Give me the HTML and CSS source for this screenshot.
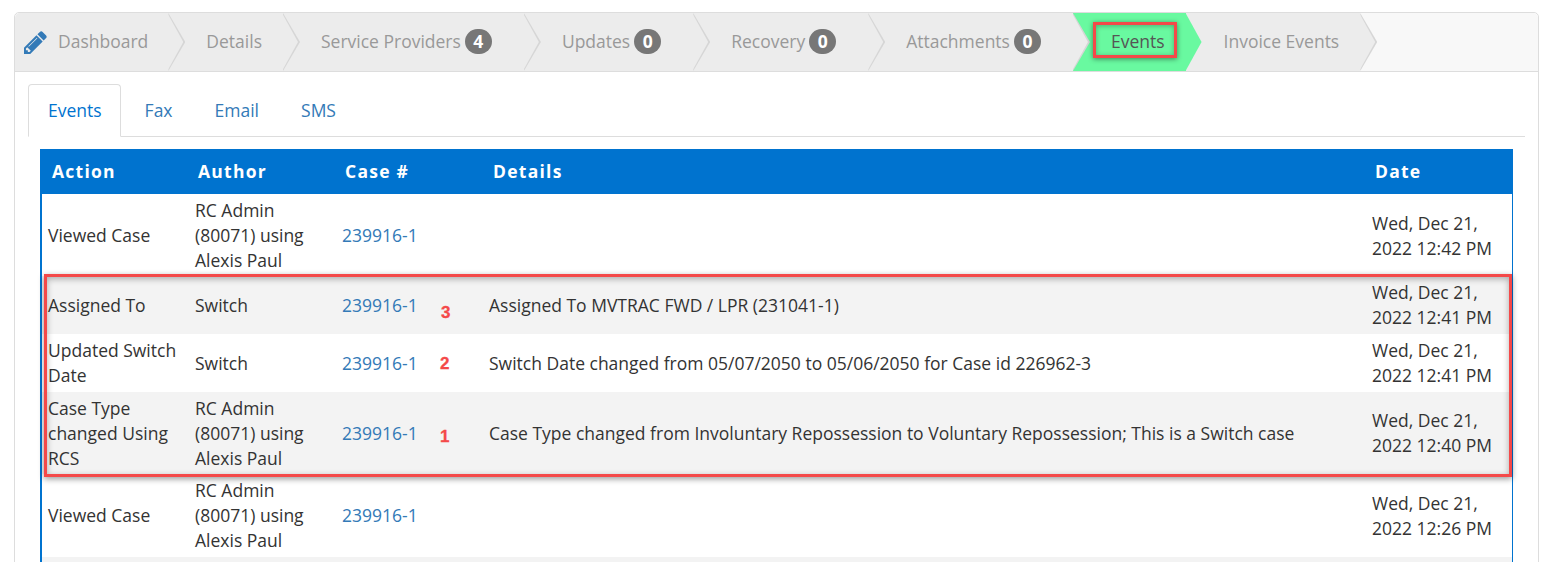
FILE: index.html
```html
<!DOCTYPE html>
<html lang="en">
  <head>
    <meta charset="UTF-8" />
    <title>Case Events</title>
    <link rel="stylesheet" href="styles.css">
  </head>
  <body>
    <div class="panel">
      <div class="steps">
        <a class="step step-first">
          <svg class="pencil" viewBox="128 128 1536 1536"><path d="M491 1536l91-91-235-235-91 91v107h128v128h107zm523-928q0-22-22-22-10 0-17 7l-542 542q-7 7-7 17 0 22 22 22 10 0 17-7l542-542q7-7 7-17zm-54-192l416 416-832 832h-416v-416zm683 96q0 53-37 90l-166 166-416-416 166-165q36-38 90-38 53 0 91 38l235 234q37 39 37 91z"/></svg>
          Dashboard
        </a>
        <a class="step">Details</a>
        <a class="step">Service Providers<span class="badge">4</span></a>
        <a class="step">Updates<span class="badge">0</span></a>
        <a class="step">Recovery<span class="badge">0</span></a>
        <a class="step">Attachments<span class="badge">0</span></a>
        <a class="step step-active">Events<span class="mark-box"></span></a>
        <a class="step">Invoice Events</a>
      </div>

      <div class="panel-body">
        <ul class="tabs">
          <li class="tab tab-active"><a>Events</a></li>
          <li class="tab"><a>Fax</a></li>
          <li class="tab"><a>Email</a></li>
          <li class="tab"><a>SMS</a></li>
        </ul>

        <div class="table-wrap">
          <table class="events">
            <colgroup>
              <col class="col-small" />
              <col class="col-small" />
              <col class="col-small" />
              <col />
              <col class="col-date" />
            </colgroup>
            <thead>
              <tr>
                <th>Action</th>
                <th class="th-tight">Author</th>
                <th class="th-tight">Case #</th>
                <th>Details</th>
                <th class="th-tight">Date</th>
              </tr>
            </thead>
            <tbody>
              <tr class="row-tall">
                <td>Viewed Case</td>
                <td>RC Admin (80071) using Alexis Paul</td>
                <td><a class="case-link">239916-1</a></td>
                <td></td>
                <td class="td-low">Wed, Dec 21, 2022 12:42 PM</td>
              </tr>
              <tr class="row-grey">
                <td>Assigned To</td>
                <td>Switch</td>
                <td><a class="case-link">239916-1</a></td>
                <td>Assigned To MVTRAC FWD / LPR (231041-1)</td>
                <td>Wed, Dec 21, 2022 12:41 PM</td>
              </tr>
              <tr>
                <td>Updated Switch Date</td>
                <td>Switch</td>
                <td><a class="case-link">239916-1</a></td>
                <td>Switch Date changed from 05/07/2050 to 05/06/2050 for Case id 226962-3</td>
                <td>Wed, Dec 21, 2022 12:41 PM</td>
              </tr>
              <tr class="row-tall row-grey">
                <td>Case Type changed Using RCS</td>
                <td>RC Admin (80071) using Alexis Paul</td>
                <td><a class="case-link">239916-1</a></td>
                <td>Case Type changed from Involuntary Repossession to Voluntary Repossession; This is a Switch case</td>
                <td>Wed, Dec 21, 2022 12:40 PM</td>
              </tr>
              <tr class="row-tall row-last">
                <td>Viewed Case</td>
                <td>RC Admin (80071) using Alexis Paul</td>
                <td><a class="case-link">239916-1</a></td>
                <td></td>
                <td>Wed, Dec 21, 2022 12:26 PM</td>
              </tr>
              <tr class="row-grey">
                <td></td>
                <td></td>
                <td></td>
                <td></td>
                <td></td>
              </tr>
            </tbody>
          </table>

          <!-- annotations drawn over the table -->
          <div class="mark-rows"></div>
          <span class="mark-num num-3">3</span>
          <span class="mark-num num-2">2</span>
          <span class="mark-num num-1">1</span>
        </div>
      </div>
    </div>
  </body>
</html>
```

FILE: styles.css
```css
html,
body {
  height: 100%;
  overflow: hidden;
}
body {
  margin: 0;
  padding: 12px 11px 0 14px;
  box-sizing: border-box;
  background-color: white;
  font-family: "Open Sans", sans-serif;
  font-size: 17.5px;
  line-height: 25px;
  color: #333;
}
.panel {
  border: 1px solid #ddd;
  border-radius: 5px;
  height: 700px;
}
.steps {
  display: flex;
  height: 58px;
  background-color: #f8f8f8;
  border-bottom: 1px solid #ddd;
  border-radius: 5px 5px 0 0;
}
.step {
  position: relative;
  display: flex;
  align-items: center;
  padding: 0 21px 2px 38px;
  background-color: #ececec;
  color: #999;
}
.step-first {
  padding-left: 9px;
  padding-right: 20px;
  border-top-left-radius: 5px;
}
/* chevron: a grey shape with the fill shape on top, one pixel in */
.step::before,
.step::after {
  content: "";
  position: absolute;
  top: 0;
  bottom: 0;
  clip-path: polygon(0 0, 100% 50%, 0 100%);
  z-index: 1;
}
.step::before {
  left: 100%;
  width: 17px;
  background-color: #d6d6d6;
}
.step::after {
  left: 100%;
  width: 16px;
  margin-left: -1px;
  background-color: #ececec;
}
.step-active {
  background-color: #69f9a0;
  color: #555;
}
.step-active::before {
  display: none;
}
.step-active::after {
  margin-left: 0;
  background-color: #69f9a0;
}
.pencil {
  width: 23px;
  height: 23px;
  margin-top: 2px;
  margin-right: 11px;
  fill: #337ab7;
}
.badge {
  display: block;
  min-width: 27px;
  height: 25px;
  margin: 0 11px 0 4px;
  border-radius: 13px;
  background-color: #777;
  color: white;
  font-weight: bold;
  text-align: center;
}
.mark-box {
  position: absolute;
  top: 9px;
  left: 20px;
  width: 84px;
  height: 36px;
  box-sizing: border-box;
  border: 3px solid #f44949;
  box-shadow: 0 1px 5px rgba(0, 0, 0, 0.45), inset 0 1px 5px rgba(0, 0, 0, 0.3);
  z-index: 2;
}
.panel-body {
  padding: 12px 13px 0;
}
.tabs {
  display: flex;
  margin: 0;
  padding: 0;
  list-style: none;
  border-bottom: 1px solid #ddd;
}
.tab {
  margin-right: 2px;
  margin-bottom: -1px;
  padding: 13px 19px;
  border: 1px solid transparent;
  color: #337ab7;
}
.tab-active {
  margin-right: 4px;
  padding-right: 18px;
  border-color: #ddd #ddd white;
  border-radius: 4px 4px 0 0;
  background-color: white;
  color: #0073cf;
}
.table-wrap {
  position: relative;
  margin: 12px 12px 0;
  border-left: 2px solid #0073cf;
  border-right: 1px solid #0073cf;
}
.events {
  width: 100%;
  table-layout: fixed;
  border-collapse: collapse;
}
.col-small {
  width: 147px;
}
.col-date {
  width: 146px;
}
.events th {
  height: 45px;
  padding: 0 10px;
  background-color: #0073cf;
  color: white;
  font-weight: bold;
  letter-spacing: 1.25px;
  text-align: left;
}
.events .th-tight {
  padding-left: 9px;
}
.events td {
  box-sizing: border-box;
  height: 58px;
  padding: 0 6px;
  color: #333;
  vertical-align: middle;
}
.events .row-tall td {
  height: 82px;
}
.events .row-last td {
  height: 83px;
}
.events .td-low {
  padding-top: 1px;
}
.row-grey {
  background-color: #f3f3f3;
}
.case-link {
  color: #337ab7;
}
.mark-rows {
  position: absolute;
  top: 125px;
  left: 2px;
  right: 0;
  height: 203px;
  box-sizing: border-box;
  border: 3px solid #f44949;
  box-shadow: 0 2px 6px rgba(0, 0, 0, 0.4), inset 0 2px 6px rgba(0, 0, 0, 0.3);
}
.mark-num {
  position: absolute;
  color: #f44949;
  font-family: "Liberation Sans", Arial, sans-serif;
  font-size: 17px;
  font-weight: bold;
  line-height: 18px;
  -webkit-text-stroke: 0.3px #f44949;
}
.num-3 {
  top: 155px;
  left: 399px;
}
.num-2 {
  top: 206px;
  left: 398px;
}
.num-1 {
  top: 279px;
  left: 398px;
}
```
